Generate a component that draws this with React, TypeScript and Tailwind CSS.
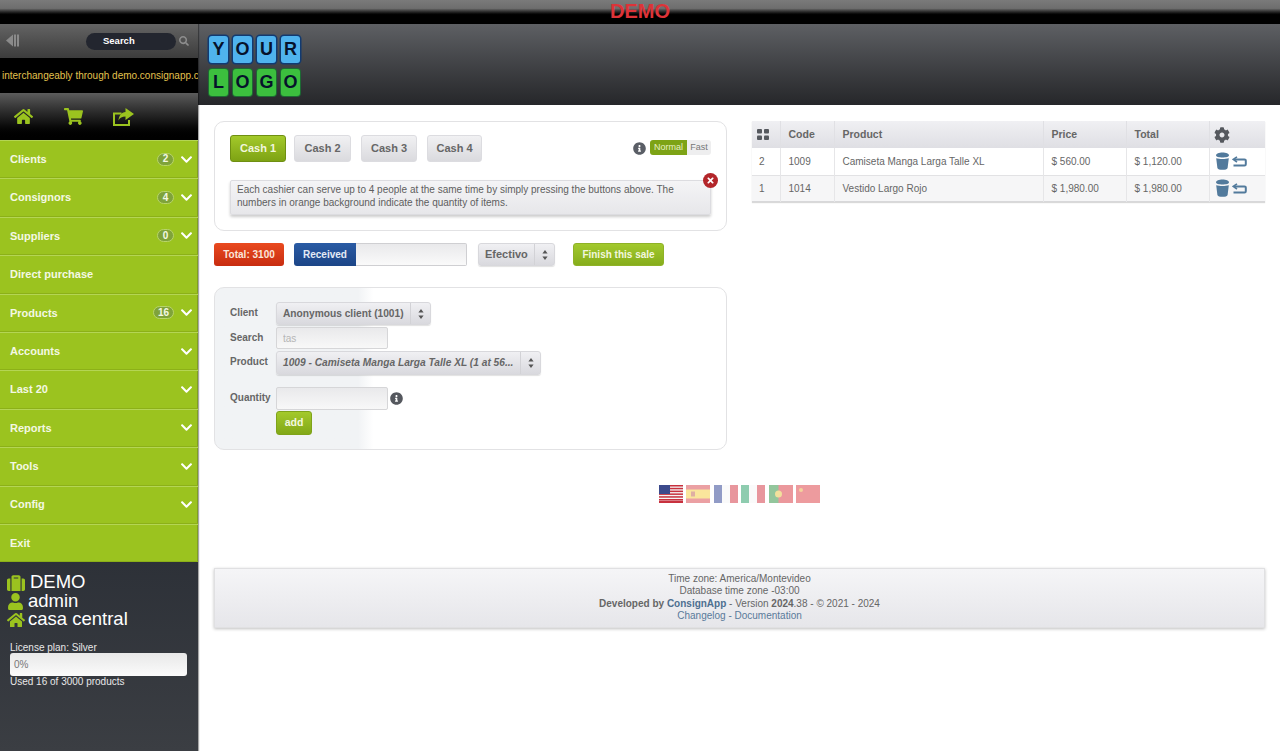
import React from 'react';
import { FaHome, FaShoppingCart, FaChevronDown, FaSuitcase, FaUser, FaCog, FaSearch, FaInfoCircle, FaTimes } from 'react-icons/fa';

const menu: { label: string; badge?: string; chevron: boolean }[] = [
  { label: 'Clients', badge: '2', chevron: true },
  { label: 'Consignors', badge: '4', chevron: true },
  { label: 'Suppliers', badge: '0', chevron: true },
  { label: 'Direct purchase', chevron: false },
  { label: 'Products', badge: '16', chevron: true },
  { label: 'Accounts', chevron: true },
  { label: 'Last 20', chevron: true },
  { label: 'Reports', chevron: true },
  { label: 'Tools', chevron: true },
  { label: 'Config', chevron: true },
  { label: 'Exit', chevron: false },
];

const Carets = () => (
  <svg width="6" height="10" viewBox="0 0 6 10" className="fill-[#555]">
    <path d="M3 0l2.6 3.6H.4zM3 10L.4 6.4h5.2z" />
  </svg>
);

const Select: React.FC<{ className: string; children: React.ReactNode }> = ({ className, children }) => (
  <div className={`${className} flex items-center rounded-[3px] border border-[#d8d8dc] bg-gradient-to-b from-[#f0f0f3] to-[#d9d9de] shadow-[0_1px_1px_rgba(0,0,0,0.12)] font-bold text-[#666]`}>
    <span className="flex-1 pl-[6px] whitespace-nowrap overflow-hidden">{children}</span>
    <span className="w-[20px] shrink-0 self-stretch flex items-center justify-center border-l border-[#d2d2d6]"><Carets /></span>
  </div>
);

const Bin = () => (
  <svg width="15" height="18" viewBox="0 0 15 18" className="fill-[#527a9c]">
    <path d="M1 3.2C1 1.5 4 .4 7.5.4S14 1.5 14 3.2 11 5.4 7.5 5.4 1 4.9 1 3.2z" />
    <path d="M1.2 6.2c3.5 1.1 9 1.1 12.600 0L12.600 16c-.2 1.300-2.500 1.800-5.100 1.800S2.600 17.300 2.400 16z" />
  </svg>
);

const Back = () => (
  <svg width="15" height="11" viewBox="0 0 15 11" fill="none" className="stroke-[#527a9c]">
    <path d="M5 .8L1.300 3.400 5 6" strokeWidth="1.600" />
    <path d="M2 3.400h10.500a1.300 1.300 0 011.300 1.300v3.500a1.300 1.300 0 01-1.300 1.300H1.500" strokeWidth="2" />
  </svg>
);

const ShareBox = () => (
  <svg width="21" height="18" viewBox="0 0 21 18" className="fill-[#9bc31f]">
    <path d="M0 4.500h8.500v2H2v9.500h13v-4h2v6H0z" />
    <path d="M12.500 0L21 6l-8.500 6V8.500c-3.500 0-5.500 1-7 4 .3-5 3-8 7-8.500z" />
  </svg>
);

const Tile: React.FC<{ c: string; green?: boolean }> = ({ c, green }) => (
  <div className={`w-[19px] h-[27px] rounded-[3px] flex items-center justify-center text-[18px] font-bold text-[#06122b] ${green ? 'bg-[#3cbf3e] shadow-[0_0_0_1px_#1d6a33]' : 'bg-[#4fb3ee] shadow-[0_0_0_1.500px_#123a70]'}`}>{c}</div>
);

// flags are small drawings, faded like in the page
const Flags = () => (
  <div className="flex justify-center gap-[3.500px] mt-[35px]">
    <svg width="24" height="18" viewBox="0 0 24 18">
      <rect width="24" height="18" fill="#f5f5f5" />
      {[0, 2.8, 5.6, 8.4, 11.2, 14].map((y) => <rect key={y} y={y} width="24" height="1.500" fill="#c8313e" />)}
      <rect y="15.800" width="24" height="2.200" fill="#c8313e" />
      <rect width="11" height="9" fill="#3c4a8c" />
    </svg>
    <svg width="24" height="18" viewBox="0 0 24 18" className="opacity-50">
      <rect width="24" height="18" fill="#d8434a" />
      <rect y="4.500" width="24" height="9" fill="#f6cc3c" />
      <rect x="5" y="6.500" width="4" height="5" fill="#c0604a" />
    </svg>
    <svg width="24" height="18" viewBox="0 0 24 18" className="opacity-50">
      <rect width="8" height="18" fill="#26398e" />
      <rect x="8" width="8" height="18" fill="#f7f7f7" />
      <rect x="16" width="8" height="18" fill="#d2303e" />
    </svg>
    <svg width="24" height="18" viewBox="0 0 24 18" className="opacity-50">
      <rect width="8" height="18" fill="#1f9a62" />
      <rect x="8" width="8" height="18" fill="#f7f7f7" />
      <rect x="16" width="8" height="18" fill="#d2303e" />
    </svg>
    <svg width="24" height="18" viewBox="0 0 24 18" className="opacity-50">
      <rect width="24" height="18" fill="#d8343c" />
      <rect width="9.500" height="18" fill="#2a8f3c" />
      <circle cx="9.500" cy="9" r="3.500" fill="#e6c23c" />
    </svg>
    <svg width="24" height="18" viewBox="0 0 24 18" className="opacity-50">
      <rect width="24" height="18" fill="#dc3a40" />
      <circle cx="5" cy="5" r="2" fill="#e8a83c" />
    </svg>
  </div>
);

export default function App() {
  return (
    <div className="w-[1280px] h-[751px] overflow-hidden bg-white font-['Liberation_Sans',Arial,sans-serif] flex flex-col">
      {/* top strip */}
      <div className="h-[24px] shrink-0 bg-gradient-to-b from-[#7a7a7a] via-[#6e6e6e] via-35% to-black to-65% flex items-center justify-center pb-[2px]">
        <span className="text-[20px] font-bold text-[#dd3338] leading-none">DEMO</span>
      </div>

      <div className="flex flex-1 min-h-0">
        {/* sidebar */}
        <aside className="w-[198px] shrink-0 flex flex-col bg-[#2b2f36] shadow-[1px_0_1px_rgba(0,0,0,0.35)] z-10">
          <div className="h-[34px] bg-gradient-to-b from-[#646464] to-[#3c3c3c] flex items-center pl-[6px] pr-[9px]">
            <svg width="14" height="13" viewBox="0 0 14 13" className="fill-[#8a8a8a] -mt-[2px]">
              <path d="M7 .5v12L0 6.500z" />
              <rect x="8" y=".5" width="2" height="12" />
              <rect x="11" y=".5" width="2" height="12" />
            </svg>
            <div className="ml-auto w-[90px] h-[17px] rounded-full bg-[#23262f] flex items-center pl-[17px] text-[9.500px] font-bold text-white">Search</div>
            <FaSearch className="ml-[3px] text-[#8d8d8d] text-[10px]" />
          </div>
          <div className="h-[35px] bg-black flex items-center overflow-hidden pl-[2px] whitespace-nowrap text-[10px] text-[#e3c24e]">
            interchangeably through demo.consignapp.c
          </div>
          <div className="h-[47px] bg-gradient-to-b from-[#5c5c5c] via-[#1c1c1c] via-55% to-black flex items-center pl-[14px] text-[#9bc31f] text-[19px]">
            <FaHome />
            <FaShoppingCart className="ml-[31px]" />
            <span className="ml-[30px]"><ShareBox /></span>
          </div>
          <nav className="bg-[#9bc31f] shadow-[inset_-1px_0_0_#7f9f20]">
            {menu.map((m) => (
              <div key={m.label} className="h-[38.4px] flex items-center pl-[10px] pr-[5px] border-t border-t-[#b4d554] border-b border-b-[#8cb018] text-[11px] font-bold text-[#f4f8e4]">
                <span>{m.label}</span>
                {m.badge && (
                  <span className="ml-auto min-w-[17px] h-[13px] px-[4px] rounded-full bg-[#7fa33a] border border-[#b8d46a] flex items-center justify-center text-[10px] leading-none">{m.badge}</span>
                )}
                {m.chevron && <FaChevronDown className={`${m.badge ? 'ml-[6px]' : 'ml-auto'} text-[13px] text-white`} />}
              </div>
            ))}
          </nav>
          <div className="flex-1 bg-gradient-to-b from-[#2d3138] to-[#3b3e43] pt-[11px]">
            <div className="pl-[7px] text-[18.500px] leading-[18.500px] text-white">
              <div className="flex items-center gap-[5px]"><FaSuitcase className="text-[#9bc31f] text-[18px]" />DEMO</div>
              <div className="flex items-center gap-[3px]"><FaUser className="text-[#9bc31f] text-[17px] mr-[1px]" />admin</div>
              <div className="flex items-center gap-[3px]"><FaHome className="text-[#9bc31f] text-[18px]" />casa central</div>
            </div>
            <div className="mt-[12px] pl-[10px] pr-[11px] text-[10px] text-[#e8e8e8] leading-[13px]">
              <div>License plan: Silver</div>
              <div className="h-[23px] -mt-[1px] rounded-[3px] bg-gradient-to-b from-[#e8e8e8] to-[#fbfbfb] flex items-center pl-[4px] text-[10px] text-[#777]">0%</div>
              <div className="-mt-[1px]">Used 16 of 3000 products</div>
            </div>
          </div>
        </aside>

        {/* main column */}
        <main className="flex-1 min-w-0 flex flex-col">
          <header className="h-[81px] shrink-0 bg-gradient-to-b from-[#5e6064] to-[#26272a] pl-[11px] pt-[12px]">
            <div className="flex flex-col gap-[6px]">
              <div className="flex gap-[5px]">{['Y', 'O', 'U', 'R'].map((c, i) => <Tile key={i} c={c} />)}</div>
              <div className="flex gap-[5px]">{['L', 'O', 'G', 'O'].map((c, i) => <Tile key={i} c={c} green />)}</div>
            </div>
          </header>

          <div className="pl-[16px] pr-[15px] pt-[16px]">
            <div className="flex gap-[25px] items-start">
              <div className="w-[513px]">
                {/* cashier card */}
                <section className="h-[110px] rounded-[10px] border border-[#e2e2e4] px-[15px] pt-[13px]">
                  <div className="flex items-start">
                    <button className="w-[56px] h-[27px] rounded-[3px] border border-[#6f8f12] bg-gradient-to-b from-[#a3c92a] to-[#7ea313] text-[11px] font-bold text-[#f1f6dd]">Cash 1</button>
                    <button className="ml-[8px] w-[57px] h-[27px] rounded-[3px] border border-[#dcdce0] bg-gradient-to-b from-[#f1f1f3] to-[#dadade] text-[11px] font-bold text-[#666]">Cash 2</button>
                    <button className="ml-[10px] w-[56px] h-[27px] rounded-[3px] border border-[#dcdce0] bg-gradient-to-b from-[#f1f1f3] to-[#dadade] text-[11px] font-bold text-[#666]">Cash 3</button>
                    <button className="ml-[10px] w-[55px] h-[27px] rounded-[3px] border border-[#dcdce0] bg-gradient-to-b from-[#f1f1f3] to-[#dadade] text-[11px] font-bold text-[#666]">Cash 4</button>
                    <FaInfoCircle className="ml-auto mt-[7px] text-[#5a5e66] text-[13px]" />
                    <div className="ml-[4px] mt-[5px] flex h-[15px] rounded-[3px] overflow-hidden text-[9px] leading-[14px]">
                      <span className="w-[37px] text-center bg-[#7da315] text-[#e6f0c4]">Normal</span>
                      <span className="w-[24px] text-center bg-[#eeeeef] text-[#777]">Fast</span>
                    </div>
                  </div>
                  <div className="relative mt-[18px] h-[35px] border border-[#dcdce0] rounded-[2px] bg-gradient-to-b from-[#f4f4f6] to-[#e7e7ea] shadow-[0_2px_3px_rgba(0,0,0,0.2)] pl-[6px] pr-[30px] pt-[3px] text-[10px] leading-[12.500px] text-[#5e5e5e]">
                    Each cashier can serve up to 4 people at the same time by simply pressing the buttons above. The numbers in orange background indicate the quantity of items.
                    <span className="absolute -top-[8px] -right-[8px] w-[15px] h-[15px] rounded-full bg-[#b3262a] flex items-center justify-center text-white text-[9px]"><FaTimes /></span>
                  </div>
                </section>

                {/* totals row */}
                <div className="mt-[12px] flex items-center h-[23px]">
                  <div className="w-[70px] h-[23px] rounded-[3px] bg-gradient-to-b from-[#ea4a1f] to-[#c72c10] flex items-center justify-center text-[10px] font-bold text-[#fbe6dc]">Total: 3100</div>
                  <div className="ml-[10px] w-[62px] h-[23px] rounded-l-[3px] bg-gradient-to-b from-[#2a5ba4] to-[#1c4587] flex items-center pl-[9px] text-[10px] font-bold text-[#e4ebf6]">Received</div>
                  <div className="w-[111px] h-[23px] rounded-r-[2px] border border-[#cfcfd2] border-l-0 bg-gradient-to-b from-[#e9e9eb] to-[#fafafa]" />
                  <Select className="ml-[11px] w-[77px] h-[23px] text-[11px]">Efectivo</Select>
                  <button className="ml-[18px] w-[91px] h-[23px] rounded-[3px] bg-gradient-to-b from-[#a2c92d] to-[#86ad1c] border border-[#8fb227] text-[10px] font-bold text-[#f2f7de]">Finish this sale</button>
                </div>

                {/* add product card */}
                <section className="mt-[21px] h-[163px] rounded-[10px] border border-[#e2e2e4] overflow-hidden bg-gradient-to-r from-[#f1f3f5] from-[28%] to-white to-[31%] pl-[15px] pt-[14px] text-[10px] font-bold text-[#666]">
                  <div className="grid grid-cols-[46px_auto] items-start gap-y-[2px] justify-start">
                    <span className="mt-[3px]">Client</span>
                    <Select className="w-[155px] h-[23px] text-[10.200px]">Anonymous client (1001)</Select>
                    <span className="mt-[3px]">Search</span>
                    <input readOnly value="tas" className="w-[112px] h-[22px] border border-[#d6d6d8] rounded-[2px] bg-gradient-to-b from-[#e9e9eb] to-[#f8f8f8] pl-[6px] text-[10px] font-normal text-[#b5b5b5]" />
                    <span className="mt-[3px]">Product</span>
                    <Select className="w-[265px] h-[24px] text-[10.200px] italic">1009 - Camiseta Manga Larga Talle XL (1 at 56...</Select>
                    <span className="mt-[13px]">Quantity</span>
                    <div className="mt-[10px] flex items-center gap-[2px]">
                      <input readOnly className="w-[112px] h-[23px] border border-[#d6d6d8] rounded-[2px] bg-gradient-to-b from-[#e9e9eb] to-[#f8f8f8]" />
                      <FaInfoCircle className="text-[#55585e] text-[13px]" />
                    </div>
                    <span />
                    <button className="-mt-[1px] w-[36px] h-[24px] rounded-[3px] border border-[#7fa31a] bg-gradient-to-b from-[#a3c92b] to-[#82a818] text-[10.500px] font-bold text-[#f3f8e0]">add</button>
                  </div>
                </section>
              </div>

              {/* sale items */}
              <table className="w-[513px] table-fixed border-collapse text-[10px] text-[#666] shadow-[0_1px_1px_rgba(0,0,0,0.15)]">
                <colgroup>
                  <col className="w-[28px]" />
                  <col className="w-[54px]" />
                  <col className="w-[209px]" />
                  <col className="w-[83px]" />
                  <col className="w-[83px]" />
                  <col className="w-[56px]" />
                </colgroup>
                <thead>
                  <tr className="h-[27px] bg-gradient-to-b from-[#f0f0f3] to-[#dfdfe4] font-bold text-left text-[10.500px]">
                    <th className="pl-[5px] border-r border-[#e0e0e4]">
                      <svg width="12" height="11" viewBox="0 0 12 11" className="fill-[#55585e]">
                        <rect width="5" height="4.500" rx="1" /><rect x="7" width="5" height="4.500" rx="1" />
                        <rect y="6.500" width="5" height="4.500" rx="1" /><rect x="7" y="6.500" width="5" height="4.500" rx="1" />
                      </svg>
                    </th>
                    <th className="pl-[8px] border-r border-[#e0e0e4]">Code</th>
                    <th className="pl-[8px] border-r border-[#e0e0e4]">Product</th>
                    <th className="pl-[8px] border-r border-[#e0e0e4]">Price</th>
                    <th className="pl-[8px] border-r border-[#e0e0e4]">Total</th>
                    <th className="pl-[4px]"><FaCog className="text-[#55585e] text-[16px]" /></th>
                  </tr>
                </thead>
                <tbody>
                  <tr className="h-[27px] border-b border-[#e2e2e4]">
                    <td className="pl-[7px] border-r border-[#e6e6e8]">2</td>
                    <td className="pl-[8px] border-r border-[#e6e6e8]">1009</td>
                    <td className="pl-[8px] border-r border-[#e6e6e8]">Camiseta Manga Larga Talle XL</td>
                    <td className="pl-[8px] border-r border-[#e6e6e8]">$ 560.00</td>
                    <td className="pl-[8px] border-r border-[#e6e6e8]">$ 1,120.00</td>
                    <td className="pl-[5px]"><span className="flex items-center gap-[2px]"><Bin /><Back /></span></td>
                  </tr>
                  <tr className="h-[26px] bg-[#f6f6f7] border-b border-[#d8d8da]">
                    <td className="pl-[7px] border-r border-[#e6e6e8]">1</td>
                    <td className="pl-[8px] border-r border-[#e6e6e8]">1014</td>
                    <td className="pl-[8px] border-r border-[#e6e6e8]">Vestido Largo Rojo</td>
                    <td className="pl-[8px] border-r border-[#e6e6e8]">$ 1,980.00</td>
                    <td className="pl-[8px] border-r border-[#e6e6e8]">$ 1,980.00</td>
                    <td className="pl-[5px]"><span className="flex items-center gap-[2px]"><Bin /><Back /></span></td>
                  </tr>
                </tbody>
              </table>
            </div>

            <Flags />

            <footer className="mt-[65px] h-[60px] border border-[#e0e0e2] bg-gradient-to-b from-[#f5f5f7] to-[#e6e6ea] shadow-[0_1px_3px_rgba(0,0,0,0.25)] pt-[4px] text-center text-[10px] leading-[12.300px] text-[#666]">
              <div>Time zone: America/Montevideo</div>
              <div>Database time zone -03:00</div>
              <div><b>Developed by <span className="text-[#4d6f90]">ConsignApp</span></b> - Version <b>2024</b>.38 - © 2021 - 2024</div>
              <div className="text-[#5a7a9a]">Changelog - Documentation</div>
            </footer>
          </div>
        </main>
      </div>
    </div>
  );
}
